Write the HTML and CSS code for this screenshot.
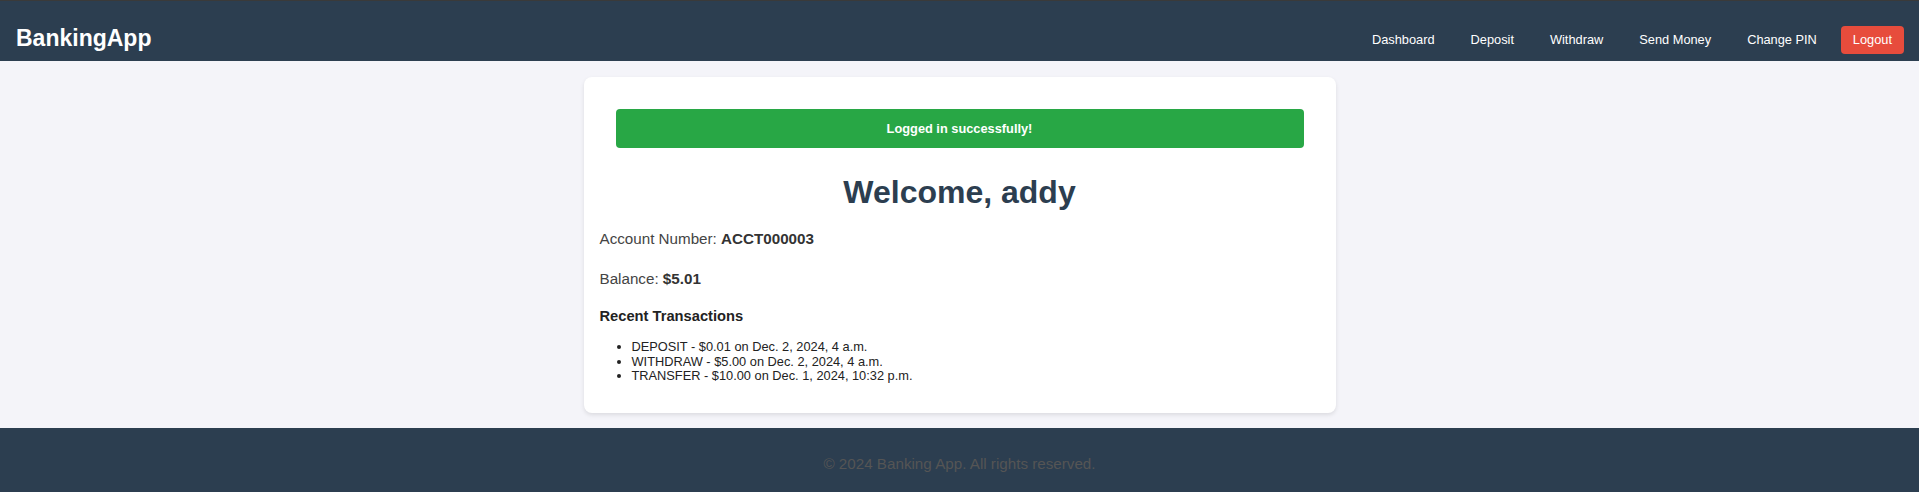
FILE: index.html
```html
<!DOCTYPE html>
<html lang="en">
<head>
<meta charset="utf-8">
<title>BankingApp</title>
<link rel="stylesheet" href="styles.css">
</head>
<body>
<header class="topbar">
  <div class="brand">BankingApp</div>
  <nav class="nav">
    <a class="nav-link" href="#">Dashboard</a>
    <a class="nav-link" href="#">Deposit</a>
    <a class="nav-link" href="#">Withdraw</a>
    <a class="nav-link" href="#">Send Money</a>
    <a class="nav-link" href="#">Change PIN</a>
    <a class="nav-link logout" href="#">Logout</a>
  </nav>
</header>
<main class="main">
  <section class="card">
    <div class="alert">Logged in successfully!</div>
    <h1 class="welcome">Welcome, addy</h1>
    <p class="info">Account Number: <strong>ACCT000003</strong></p>
    <p class="info">Balance: <strong>$5.01</strong></p>
    <h3 class="section-title">Recent Transactions</h3>
    <ul class="tx-list">
      <li>DEPOSIT - $0.01 on Dec. 2, 2024, 4 a.m.</li>
      <li>WITHDRAW - $5.00 on Dec. 2, 2024, 4 a.m.</li>
      <li>TRANSFER - $10.00 on Dec. 1, 2024, 10:32 p.m.</li>
    </ul>
  </section>
</main>
<footer class="footer">© 2024 Banking App. All rights reserved.</footer>
</body>
</html>
```
FILE: styles.css
```css
* { box-sizing: border-box; }
html, body { margin: 0; padding: 0; }
body {
  font-family: "Liberation Sans", Arial, sans-serif;
  background: #f4f4f9;
  color: #333;
  height: 492px;
  overflow: hidden;
  display: flex;
  flex-direction: column;
}
.topbar {
  background: #2c3e50;
  border-top: 1px solid #3a3a3a;
  height: 61px;
  padding: 24px 15px 7px 16px;
  display: flex;
  justify-content: space-between;
  align-items: center;
}
.brand {
  color: #fff;
  font-weight: bold;
  font-size: 23px;
  line-height: 26px;
  margin-bottom: 4px;
}
.nav {
  display: flex;
  align-items: center;
  gap: 12px;
}
.nav-link {
  color: #fff;
  text-decoration: none;
  font-size: 12.8px;
  line-height: 16px;
  padding: 6px 12px;
  border-radius: 4px;
}
.logout {
  background: #e74c3c;
  padding: 6px 12px;
}
.main {
  padding: 16px 0 15px;
  flex: 1;
}
.card {
  width: 752px;
  margin: 0 auto;
  background: #fff;
  border-radius: 8px;
  box-shadow: 0 2px 4px rgba(0, 0, 0, 0.1);
  padding: 16px 16px 1px;
}
.alert {
  margin: 16px;
  background: #28a745;
  color: #fff;
  font-weight: bold;
  font-size: 12.8px;
  text-align: center;
  line-height: 15px;
  padding: 12px;
  border-radius: 4px;
}
.welcome {
  text-align: center;
  color: #2c3e50;
  font-size: 32px;
  line-height: 37px;
  margin: 26px 0 0;
}
.info {
  font-size: 15.2px;
  line-height: 24px;
  margin: 16px 0 0;
  color: #444;
}
.info + .info { margin-top: 16px; }
.info strong { color: #333; }
.section-title {
  font-size: 14.7px;
  line-height: 17px;
  margin: 17px 0 0;
  color: #222;
}
.tx-list {
  margin: 15px 0 28px;
  padding-left: 32px;
  font-size: 12.8px;
  line-height: 14.7px;
  color: #222;
}
.footer {
  background: #2c3e50;
  color: #555;
  text-align: center;
  font-size: 15.2px;
  line-height: 17px;
  height: 64px;
  padding-top: 27px;
}
```
